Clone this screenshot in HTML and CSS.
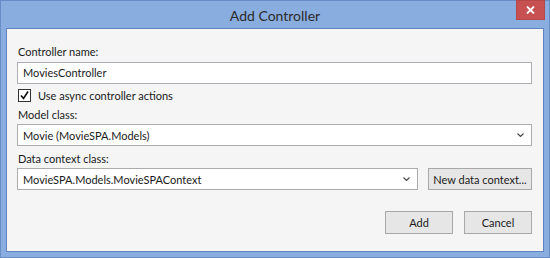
FILE: index.html
```html
<!DOCTYPE html>
<html lang="en">
<head>
    <meta charset="UTF-8">
    <meta name="viewport" content="width=device-width, initial-scale=1.0">
    <title>Add Controller</title>
    <link rel="stylesheet" href="styles.css">
</head>
<body>
    <div class="window">
        <div class="titlebar">
            <div class="title">Add Controller</div>
            <div class="close-btn">
                <svg width="9" height="8" viewBox="0 0 9 8"><path d="M1 0.5 L8 7.5 M8 0.5 L1 7.5" stroke="#fff" stroke-width="1.8" fill="none"/></svg>
            </div>
        </div>
        <div class="panel">
            <div class="field-label">Controller name:</div>
            <div class="textbox">MoviesController</div>
            <div class="check-row">
                <div class="checkbox">
                    <svg width="11" height="11" viewBox="0 0 11 11"><path d="M2 5.5 L4.5 8.5 L9 1.5" stroke="#111" stroke-width="1.6" fill="none"/></svg>
                </div>
                <span>Use async controller actions</span>
            </div>
            <div class="field-label spaced">Model class:</div>
            <div class="combo">
                <span>Movie (MovieSPA.Models)</span>
                <svg class="chevron" width="7" height="4" viewBox="0 0 7 4"><path d="M0.5 0.5 L3.5 3.5 L6.5 0.5" stroke="#444" stroke-width="1.1" fill="none"/></svg>
            </div>
            <div class="field-label spaced-more">Data context class:</div>
            <div class="combo-row">
                <div class="combo grow">
                    <span>MovieSPA.Models.MovieSPAContext</span>
                    <svg class="chevron" width="7" height="4" viewBox="0 0 7 4"><path d="M0.5 0.5 L3.5 3.5 L6.5 0.5" stroke="#444" stroke-width="1.1" fill="none"/></svg>
                </div>
                <button class="btn btn-new">New data context...</button>
            </div>
            <div class="actions">
                <button class="btn btn-dialog">Add</button>
                <button class="btn btn-dialog">Cancel</button>
            </div>
        </div>
    </div>
</body>
</html>
```

FILE: styles.css
```css
* { margin: 0; padding: 0; box-sizing: border-box; }
body { font-family: Lato, "Noto Sans", sans-serif; font-size: 11px; color: #1a1a1a; background: #fff; }
.window { width: 550px; height: 258px; background: #8aaddf; border: 1px solid #6a8cc6; display: flex; flex-direction: column; }
.titlebar { height: 27px; position: relative; display: flex; align-items: center; justify-content: center; }
.title { font-size: 14px; color: #2b2b2b; padding-top: 1px; }
.close-btn { position: absolute; top: -1px; right: 4px; width: 29px; height: 20px; background: #c75050; border: 1px solid #b54747; display: flex; align-items: center; justify-content: center; }
.panel { flex: 1; margin: 0 5px 5px 5px; background: #f5f5f5; border: 1px solid #5e82c2; padding: 15px 11px 0 10px; }
.field-label { height: 16px; line-height: 16px; margin-bottom: 2px; padding-left: 1px; }
.field-label.spaced { margin-top: 4px; margin-bottom: 1px; }
.field-label.spaced-more { margin-top: 5px; margin-bottom: 1px; }
.textbox { height: 22px; background: #fff; border: 1px solid #abadb3; padding: 0 5px; line-height: 20px; }
.check-row { display: flex; align-items: center; gap: 7px; height: 15px; margin-top: 4px; padding-left: 1px; }
.checkbox { width: 13px; height: 13px; border: 1px solid #333; background: #fff; display: flex; align-items: center; justify-content: center; }
.combo { height: 22px; background: #fff; border: 1px solid #acacac; padding: 0 7px 0 5px; display: flex; align-items: center; justify-content: space-between; }
.combo-row { display: flex; gap: 10px; }
.grow { flex: 1; }
.chevron { flex-shrink: 0; }
.btn { font-family: inherit; font-size: 11px; color: #1a1a1a; background: #e6e6e6; border: 1px solid #a8a8a8; height: 22px; white-space: nowrap; }
.btn-new { width: 104px; }
.actions { display: flex; justify-content: flex-end; gap: 11px; margin-top: 21px; }
.btn-dialog { width: 68px; height: 23px; }
```
